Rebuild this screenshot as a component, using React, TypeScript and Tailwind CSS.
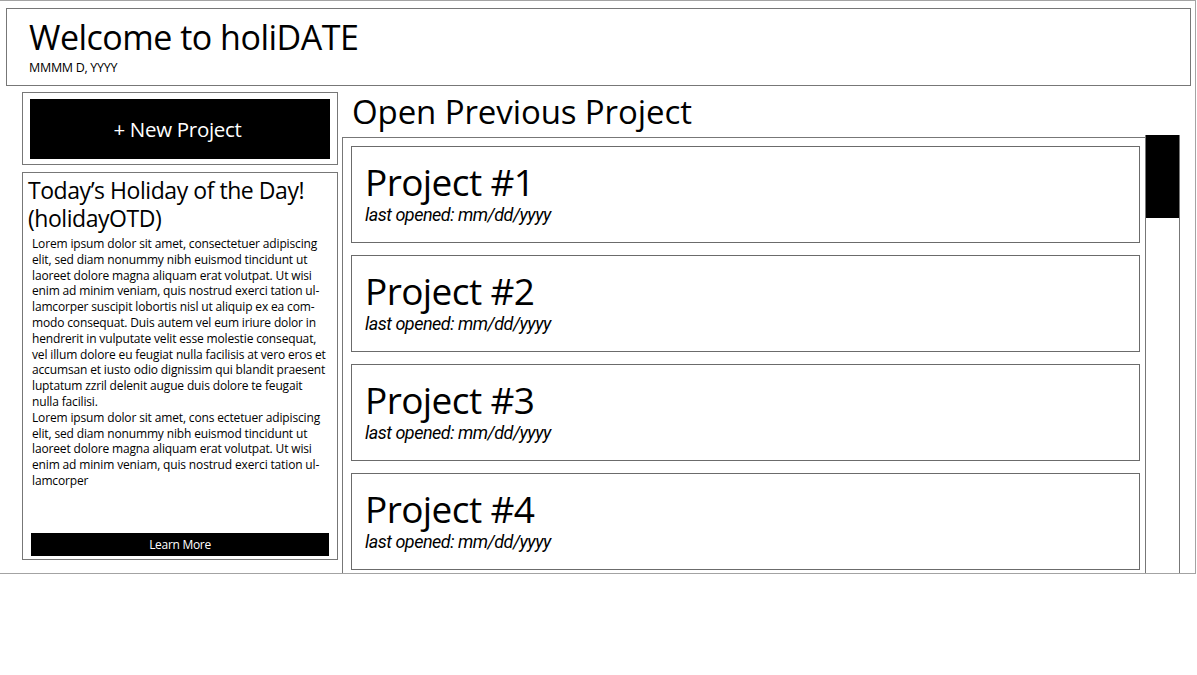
import React from "react";

const body1 = [
  "Lorem ipsum dolor sit amet, consectetuer adipiscing",
  "elit, sed diam nonummy nibh euismod tincidunt ut",
  "laoreet dolore magna aliquam erat volutpat. Ut wisi",
  "enim ad minim veniam, quis nostrud exerci tation ul-",
  "lamcorper suscipit lobortis nisl ut aliquip ex ea com-",
  "modo consequat. Duis autem vel eum iriure dolor in",
  "hendrerit in vulputate velit esse molestie consequat,",
  "vel illum dolore eu feugiat nulla facilisis at vero eros et",
  "accumsan et iusto odio dignissim qui blandit praesent",
  "luptatum zzril delenit augue duis dolore te feugait",
  "nulla facilisi.",
  "Lorem ipsum dolor sit amet, cons ectetuer adipiscing",
  "elit, sed diam nonummy nibh euismod tincidunt ut",
  "laoreet dolore magna aliquam erat volutpat. Ut wisi",
  "enim ad minim veniam, quis nostrud exerci tation ul-",
  "lamcorper",
];

const projects = ["Project #1", "Project #2", "Project #3", "Project #4"];

export default function App() {
  return (
    <div
      className="w-[1197px] h-[675px] bg-white text-black"
      style={{ fontFamily: '"Open Sans", "Noto Sans", sans-serif' }}
    >
      <div className="w-[1196px] h-[574px] border border-l-0 border-[#a3a3a3] flex flex-col overflow-hidden">
        {/* header */}
        <div className="ml-[6px] mt-[7px] w-[1185px] h-[78px] border border-[#777] pl-[22px] pt-[7px] shrink-0">
          <div className="text-[34px] leading-[42px] tracking-[-0.5px]">Welcome to holiDATE</div>
          <div className="text-[12.5px] leading-[16px] tracking-[-0.3px] mt-[2px]">MMMM D, YYYY</div>
        </div>

        <div className="flex flex-1 min-h-0 mt-[6px]">
          {/* left column */}
          <div className="ml-[22px] w-[316px] flex flex-col">
            <div className="h-[73px] border border-[#777] px-[7px] pt-[6px]">
              <div className="h-[60px] bg-black text-white flex items-center justify-center text-[20.5px] tracking-[-0.3px] pr-[5px]">
                + New Project
              </div>
            </div>
            <div className="mt-[7px] h-[388px] border border-[#777] flex flex-col">
              <div className="pl-[5px] pt-[3px] text-[23px] leading-[28px] tracking-[-0.45px]">
                <div>Today’s Holiday of the Day!</div>
                <div>(holidayOTD)</div>
              </div>
              <div className="pl-[9px] pt-[4px] text-[12px] leading-[15.8px] tracking-[-0.15px]">
                {body1.map((l, i) => (
                  <div key={i} className="whitespace-nowrap">
                    {l}
                  </div>
                ))}
              </div>
              <div className="mt-auto mb-[3px] mx-[8px] h-[23px] bg-black text-white text-[12px] flex items-center justify-center tracking-[-0.3px]">
                Learn More
              </div>
            </div>
          </div>

          {/* right column */}
          <div className="ml-[4px] flex-1 flex flex-col min-h-0">
            <div className="pl-[10px] text-[33px] leading-[40px] tracking-[-0.1px] h-[44px]">
              Open Previous Project
            </div>
            <div className="flex flex-1 min-h-0 mt-[-1px]">
              <div className="mt-[2px] w-[803px] border-l border-t border-[#777] pl-[8px] pt-[8px] flex flex-col gap-[12px]">
                {projects.map((p) => (
                  <div
                    key={p}
                    className="w-[789px] h-[97px] shrink-0 border border-[#6b6b6b] pl-[13px] pt-[15px]"
                  >
                    <div className="text-[37px] leading-[40px] tracking-[-0.6px]">{p}</div>
                    <div
                      className="text-[18px] leading-[18px] italic tracking-[-0.5px] mt-[4px]"
                      style={{ fontFamily: "Roboto, sans-serif", fontWeight: 400 }}
                    >
                      last opened: mm/dd/yyyy
                    </div>
                  </div>
                ))}
              </div>
              <div className="w-[35px] border-x border-[#777] flex flex-col">
                <div className="h-[83px] bg-black" />
              </div>
            </div>
          </div>
        </div>
      </div>
    </div>
  );
}
